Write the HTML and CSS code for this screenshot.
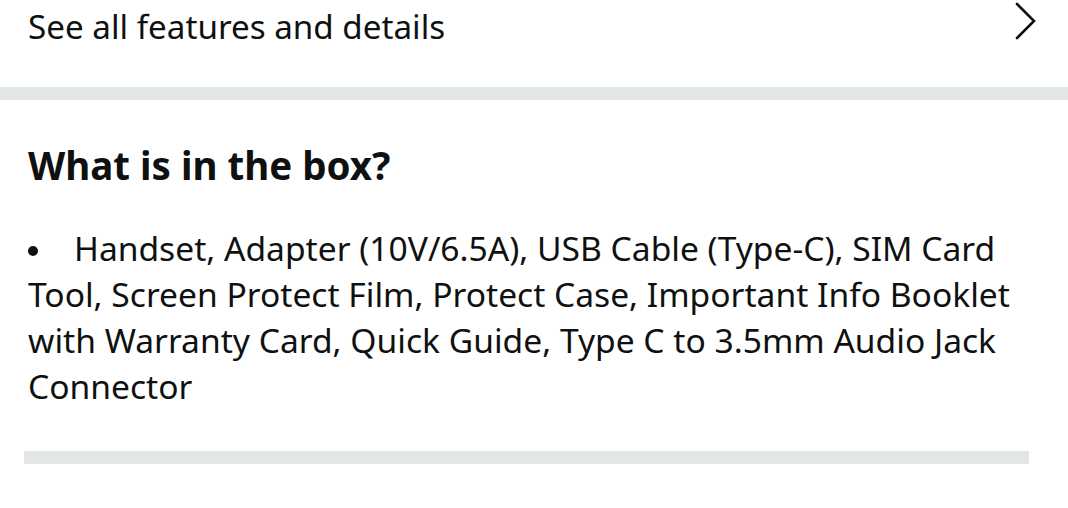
FILE: index.html
```html
<!DOCTYPE html>
<html>
<head>
<meta charset="utf-8">
<link rel="stylesheet" href="styles.css">
</head>
<body>
<div class="page">
  <a class="row-link" href="#">
    <span class="row-text">See all features and details</span>
    <svg class="chev" width="26" height="40" viewBox="0 0 26 40"><path d="M3 4 L20 21 L3 38" fill="none" stroke="#0f1111" stroke-width="2.6" stroke-linecap="round" stroke-linejoin="miter"/></svg>
  </a>
  <div class="band"></div>
  <section class="box">
    <h2 class="box-title">What is in the box?</h2>
    <p class="box-text"><span class="bullet"></span>Handset, Adapter (10V/6.5A), USB Cable (Type-C), SIM Card Tool, Screen Protect Film, Protect Case, Important Info Booklet with Warranty Card, Quick Guide, Type C to 3.5mm Audio Jack Connector</p>
    <div class="divider"></div>
  </section>
</div>
</body>
</html>
```
FILE: styles.css
```css
html, body {
  margin: 0;
  padding: 0;
  background: #ffffff;
}
.page {
  width: 1068px;
  height: 508px;
  overflow: hidden;
  font-family: "Noto Sans", "Open Sans", sans-serif;
  color: #0f1111;
}
.row-link {
  display: flex;
  align-items: flex-start;
  justify-content: space-between;
  height: 87px;
  padding: 0 28px 0 28px;
  box-sizing: border-box;
  text-decoration: none;
  color: #0f1111;
}
.row-text {
  font-size: 33.2px;
  line-height: 40px;
  padding-top: 7px;
}
.chev {
  display: block;
}
.band {
  height: 13px;
  background: #e3e6e6;
}
.box {
  padding: 41px 0 0 28px;
}
.box-title {
  margin: 0;
  font-size: 38.5px;
  line-height: 48px;
  font-weight: 700;
}
.box-text {
  margin: 36px 0 0 0;
  font-size: 33.6px;
  line-height: 46px;
  width: 1004px;
}
.bullet {
  display: inline-block;
  width: 10px;
  height: 10px;
  border-radius: 50%;
  background: #0f1111;
  vertical-align: 5px;
  margin-right: 36px;
}
.divider {
  height: 13px;
  background: #e3e6e6;
  margin: 42px 39px 0 -4px;
}
```
